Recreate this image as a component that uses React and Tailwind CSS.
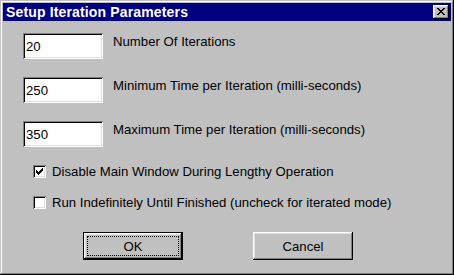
import React from 'react';

const fields = [
  { value: '20', label: 'Number Of Iterations' },
  { value: '250', label: 'Minimum Time per Iteration (milli-seconds)' },
  { value: '350', label: 'Maximum Time per Iteration (milli-seconds)' },
];

const options = [
  { checked: true, label: 'Disable Main Window During Lengthy Operation' },
  { checked: false, label: 'Run Indefinitely Until Finished (uncheck for iterated mode)' },
];

// 8x7 pixel close glyph
const closeRows = ['11000011', '01100110', '00111100', '00011000', '00111100', '01100110', '11000011'];

const CloseGlyph = () => (
  <svg width="8" height="7" viewBox="0 0 8 7" shapeRendering="crispEdges">
    {closeRows.map((row, y) =>
      row.split('').map((c, x) => (c === '1' ? <rect key={`${x}-${y}`} x={x} y={y} width="1" height="1" fill="#000" /> : null))
    )}
  </svg>
);

const CheckBox = ({ checked }) => (
  <div className="w-[13px] h-[13px] bg-white shrink-0 relative shadow-[inset_1px_1px_0_0_#808080,inset_-1px_-1px_0_0_#fff,inset_2px_2px_0_0_#000,inset_-2px_-2px_0_0_#dfdfdf]">
    {checked && (
      <svg className="absolute left-[3px] top-[3px]" width="7" height="7" viewBox="0 0 7 7" shapeRendering="crispEdges">
        <path d="M6 0h1v1H6zM5 1h2v1H5zM4 2h3v1H4zM0 2h1v1H0zM0 3h2v1H0zM3 3h3v1H3zM0 4h5v1H0zM1 5h3v1H1zM2 6h1v1H2z" fill="#000" />
      </svg>
    )}
  </div>
);

export default function App() {
  return (
    <div className="w-[454px] h-[275px] bg-[#c0c0c0] p-[3px] flex flex-col font-['Liberation_Sans',Arial,sans-serif] text-black shadow-[inset_-1px_-1px_0_0_#000,inset_1px_1px_0_0_#c0c0c0,inset_-2px_-2px_0_0_#808080,inset_2px_2px_0_0_#fff]">
      <div className="h-[18px] bg-[#000080] flex items-center justify-between pl-[3px] pr-[2px]">
        <span className="text-white font-bold text-[14px] leading-[18px] tracking-[0.15px]">Setup Iteration Parameters</span>
        <div className="w-[16px] h-[14px] bg-[#c0c0c0] flex items-start justify-center pt-[3px] shadow-[inset_-1px_-1px_0_0_#000,inset_1px_1px_0_0_#fff,inset_-2px_-2px_0_0_#808080,inset_2px_2px_0_0_#dfdfdf]">
          <CloseGlyph />
        </div>
      </div>

      <div className="flex flex-col pl-[20px] pt-[12px] text-[13.2px] leading-[15px]">
        <div className="flex flex-col gap-[18px]">
          {fields.map((f) => (
            <div key={f.value} className="flex items-start gap-[10px]">
              <div className="w-[80px] h-[26px] bg-white flex items-center pl-[3px] shadow-[inset_1px_1px_0_0_#808080,inset_-1px_-1px_0_0_#fff,inset_2px_2px_0_0_#000,inset_-2px_-2px_0_0_#dfdfdf]">
                {f.value}
              </div>
              <span className="pt-[1px]">{f.label}</span>
            </div>
          ))}
        </div>

        <div className="flex flex-col gap-[18px] mt-[18px] pl-[10px]">
          {options.map((o) => (
            <div key={o.label} className="flex items-center gap-[6px] h-[13px]">
              <CheckBox checked={o.checked} />
              <span className="whitespace-nowrap">{o.label}</span>
            </div>
          ))}
        </div>

        <div className="flex gap-[70px] mt-[23px] pl-[60px]">
          <button className="w-[100px] h-[28px] border border-black bg-[#c0c0c0] shadow-[inset_-1px_-1px_0_0_#000,inset_1px_1px_0_0_#fff,inset_-2px_-2px_0_0_#808080,inset_2px_2px_0_0_#dfdfdf] flex items-center justify-center p-[3px]">
            <span className="w-full h-full border border-dotted border-black flex items-center justify-center">OK</span>
          </button>
          <button className="w-[100px] h-[28px] bg-[#c0c0c0] shadow-[inset_-1px_-1px_0_0_#000,inset_1px_1px_0_0_#fff,inset_-2px_-2px_0_0_#808080,inset_2px_2px_0_0_#dfdfdf] flex items-center justify-center">
            Cancel
          </button>
        </div>
      </div>
    </div>
  );
}
